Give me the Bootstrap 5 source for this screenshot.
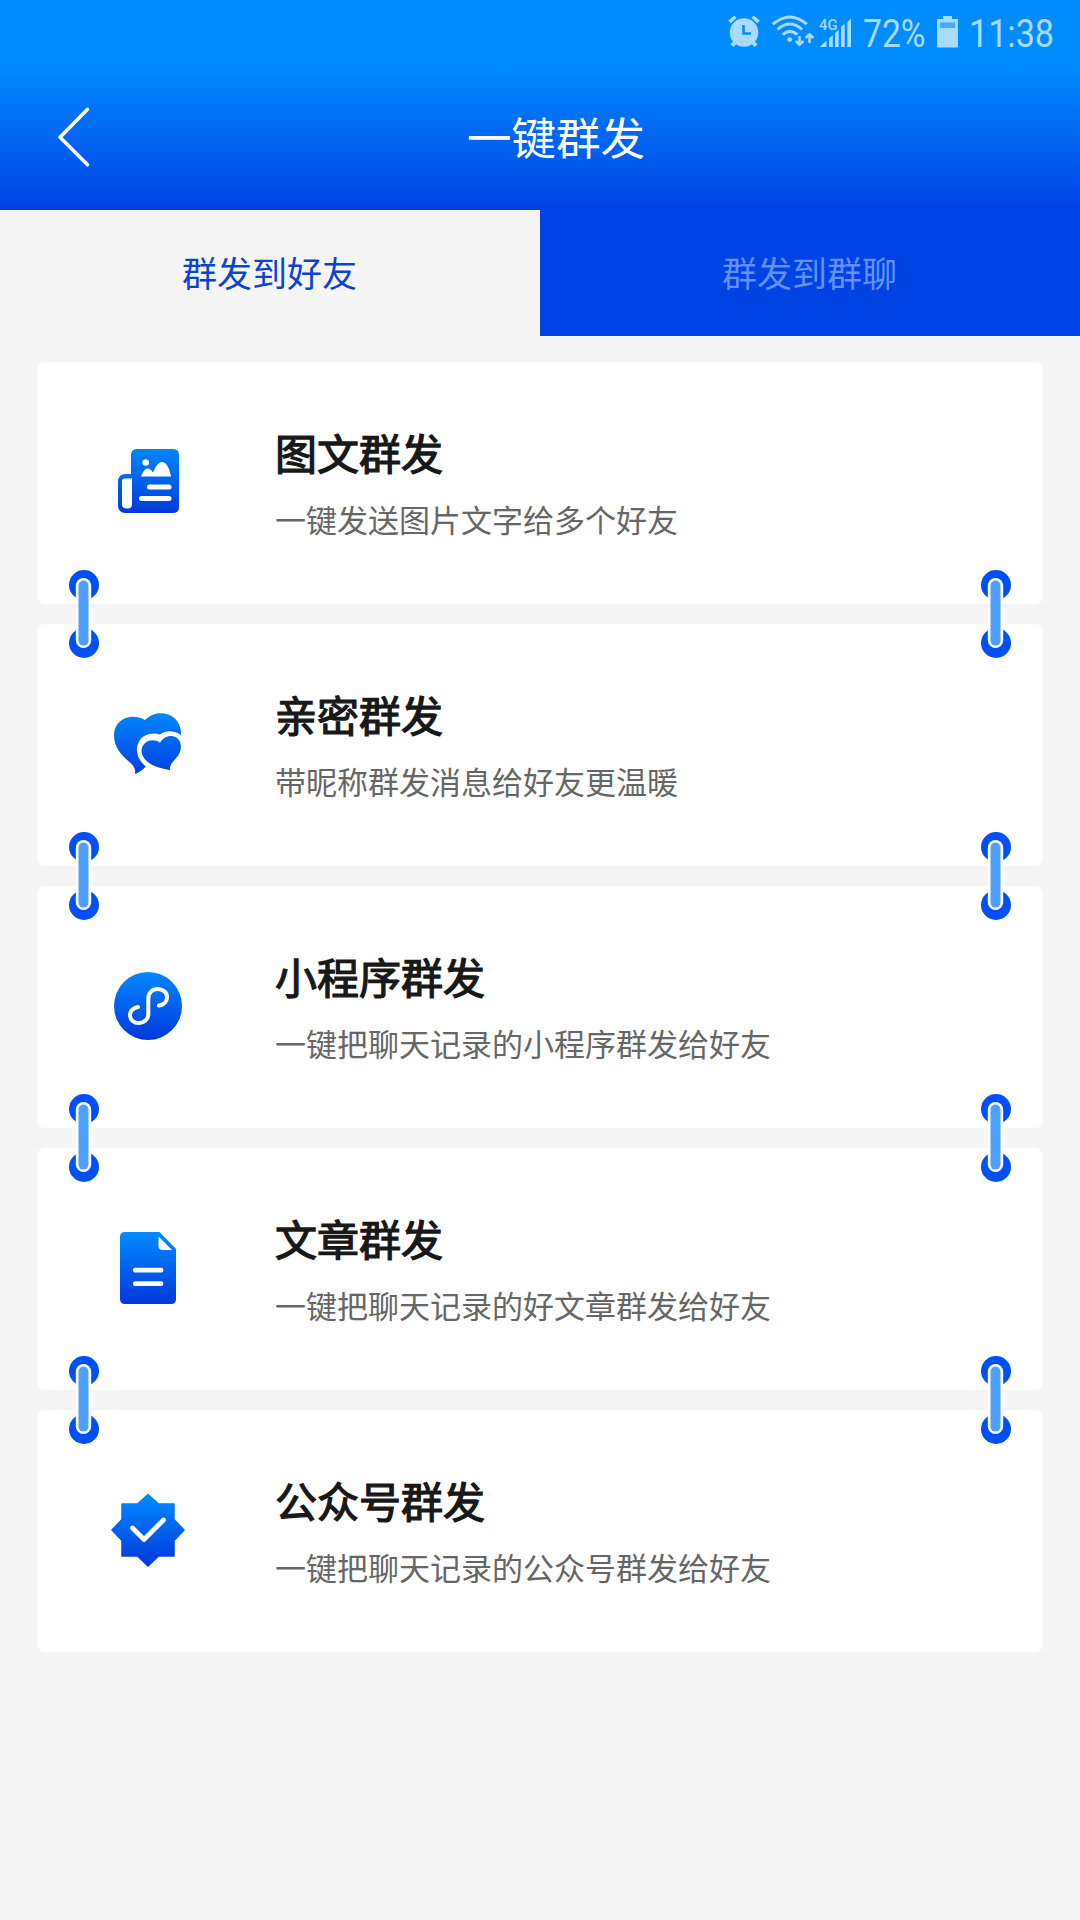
<!DOCTYPE html>
<html lang="zh-CN">
<head>
<meta charset="utf-8">
<meta name="viewport" content="width=device-width, initial-scale=1">
<title>一键群发</title>
<link href="https://cdn.jsdelivr.net/npm/bootstrap@5.3.0/dist/css/bootstrap.min.css" rel="stylesheet">
<style>
body{background:#f5f5f5;font-family:"Noto Sans CJK SC",sans-serif;min-height:1920px;overflow-x:hidden}
.top-area{height:210px;background:linear-gradient(#008cff 0,#008cff 62px,#0043e5 208px)}
.status-line{height:64px;padding-right:24px}
.status-line svg{display:block;flex:none;overflow:visible}
.status-txt{font-family:Roboto,sans-serif;font-size:38.5px}
.title-line{height:146px;padding-left:56px}
.page-title{font-size:44.5px;line-height:60px;color:#fff;margin:0 0 0 375px;font-weight:400;padding-bottom:2px}
.back-btn{border:0;background:none;padding:0;width:36px;height:64px}
.tab-line{height:126px}
.tab-line .nav-link{font-size:35px;line-height:50px;border-radius:0;padding:0 1px 2px 0;color:#6390f5;background:#0043e5}
.tab-line .nav-link.active{color:#0b43d2;background:#f5f5f5}
.send-list{padding:26px 37px 0;gap:20px}
.send-card{height:242px;border:0;border-radius:8px;background:#fff;padding-left:63px}
.pic-cell{width:100px;height:100px;margin-right:75px;flex:none}
.send-name{font-size:42px;line-height:60px;font-weight:400;-webkit-text-stroke:1.25px #181818;color:#181818;margin:0 0 14px}
.send-desc{font-size:31px;line-height:46px;color:#666;margin:0 0 2px}
.ring{position:absolute;top:208px;width:30px;height:88px;z-index:2}
.ring-l{left:32px}
.ring-r{right:32px}
</style>
</head>
<body>
<svg width="0" height="0" class="position-absolute" aria-hidden="true">
<defs>
<linearGradient id="blue" gradientUnits="userSpaceOnUse" x1="0" y1="15" x2="0" y2="86"><stop offset="0" stop-color="#008aff"/><stop offset="1" stop-color="#0038dc"/></linearGradient>
<symbol id="link" viewBox="0 0 30 88"><circle cx="15" cy="15" r="15" fill="#0050f5"/><circle cx="15" cy="73" r="15" fill="#0050f5"/><rect x="6.8" y="8" width="15.4" height="70" rx="7.7" fill="#fff"/><path d="M7 28h15v32H7z" fill="#fff"/><rect x="9.5" y="10.6" width="10" height="65" rx="5" fill="#4da0ff"/></symbol>
</defs>
</svg>

<header class="top-area">
  <div class="status-line d-flex justify-content-end">
    <svg width="44" height="64" viewBox="728 0 44 64"><g fill="#a8dbff"><circle cx="744" cy="32.500" r="14.300"/><path d="M728.300 20.500l6-5 2.200 2.600-6 5.400zM759.700 20.500l-6-5-2.200 2.600 6 5.400zM730.500 44.500l4-5 3 3-4 4.500zM757.500 44.500l-4-5-3 3 4 4.500z"/></g><path d="M743.500 25v8.500h7.500" fill="none" stroke="#008cff" stroke-width="2.600"/></svg>
    <svg width="46" height="64" viewBox="772 0 46 64"><g fill="none" stroke="#a8dbff" stroke-width="3"><path d="M772.800 24.200q17-14.500 34 0M777.500 29.500q12.200-11 24.600 0M782.600 34.600q7.300-6.500 14.800 0"/><path d="M799.500 36v8M795.700 41l3.800 3.800 3.800-3.800M809.500 43v-8M805.700 38l3.800-3.800 3.800 3.800" stroke-width="2.500"/></g><circle cx="789.700" cy="39.600" r="2.400" fill="#a8dbff"/></svg>
    <svg width="43" height="64" viewBox="818 0 43 64" fill="#a8dbff"><text x="819" y="30" font-family="Roboto" font-weight="500" font-size="15.500" textLength="18.500" lengthAdjust="spacingAndGlyphs">4G</text><path d="M819.500 47l7-6.500V47zM829 38.500l3.800-3.500v12H829zM835 33l3.700-3.300V47H835zM841 27l3.700-3.300V47H841zM847.300 22l3.700-3.500V47h-3.700z"/></svg>
    <svg width="73" height="64" viewBox="861 0 73 64"><text class="status-txt" x="863" y="46.600" fill="#a8dbff" textLength="62.500" lengthAdjust="spacingAndGlyphs">72%</text></svg>
    <svg width="34" height="64" viewBox="934 0 34 64"><path d="M943 16h9v3h5q1 0 1 1v26q0 1.500-1.500 1.500h-18q-1.500 0-1.500-1.500V20q0-1 1-1h5z" fill="#a8dbff"/><path d="M940 22.300h15V28h-15z" fill="#4aa9ff"/></svg>
    <svg width="88" height="64" viewBox="968 0 88 64"><text class="status-txt" x="969" y="46.600" fill="#a8dbff" textLength="85" lengthAdjust="spacingAndGlyphs">11:38</text></svg>
  </div>
  <div class="title-line d-flex align-items-center">
    <button class="back-btn" aria-label="返回"><svg class="d-block" width="36" height="64" viewBox="56 105 36 64"><path d="M87.500 109.300L60 137.300l27.500 27.500" fill="none" stroke="#fff" stroke-width="3.600" stroke-linecap="round" stroke-linejoin="round"/></svg></button>
    <h1 class="page-title">一键群发</h1>
  </div>
</header>
<nav class="tab-line nav nav-fill flex-nowrap">
  <a class="nav-link active w-50 d-flex align-items-center justify-content-center" href="#">群发到好友</a>
  <a class="nav-link w-50 d-flex align-items-center justify-content-center" href="#">群发到群聊</a>
</nav>
<main class="send-list d-flex flex-column">
  <section class="card send-card flex-row align-items-center">
    <svg class="pic-cell" viewBox="0 3 100 100"><path d="M37 19h36q6 0 6 6v52q0 6-6 6H26q-8 0-8-8V52q0-8 8-8h5V25q0-6 6-6z" fill="url(#blue)"/><g fill="#fff"><path d="M24.500 48.500H32V74q0 4.500-4.500 4.500h-1Q22 78.500 22 74V51q0-2.500 2.500-2.500z"/><circle cx="45.700" cy="32.500" r="3.300"/><path d="M41 46.500q3-8 6.500-8 3 0 5.500 4 4-10.500 9-10.500 6 0 9 14.500z"/><rect x="47" y="54.500" width="24.500" height="5" rx="2.500"/><rect x="39" y="66" width="32.500" height="5" rx="2.500"/></g></svg>
    <div><h2 class="send-name">图文群发</h2><p class="send-desc">一键发送图片文字给多个好友</p></div>
    <svg class="ring ring-l"><use href="#link"/></svg><svg class="ring ring-r"><use href="#link"/></svg>
  </section>
  <section class="card send-card flex-row align-items-center">
    <svg class="pic-cell" viewBox="0 0 100 100"><path d="M45 25C51 18.500 60 16.500 68 19.500 77 22.500 81.500 31 81 40 74.500 35.500 66 35 60 39.500c-8.500-2.500-17 .5-20.700 6.500-5 8.500-2 18.500 6.400 25.500-3 3.500-6.700 6-10.700 7.500 1-5.500-1.700-8.500-5.500-12C20.500 59.500 14 52 14 40 14 24.500 31 17 45 25z" fill="url(#blue)"/><path d="M60 47.700C63.500 41.500 71 39 76.500 42.500 81 45.500 82 52 79.800 57.500c-2.600 6.500-10.800 10-9.800 17.500C61 73.500 54 71.500 48.500 67.500c-7-5-8.500-12-5.500-17C46.500 45 54.500 43.500 60 47.700z" fill="url(#blue)"/></svg>
    <div><h2 class="send-name">亲密群发</h2><p class="send-desc">带昵称群发消息给好友更温暖</p></div>
    <svg class="ring ring-l"><use href="#link"/></svg><svg class="ring ring-r"><use href="#link"/></svg>
  </section>
  <section class="card send-card flex-row align-items-center">
    <svg class="pic-cell" viewBox="0 2 100 100"><circle cx="48" cy="51" r="34" fill="url(#blue)"/><path d="M38 52c-4 .5-8 3.500-8 8 0 5 4 8 9 8s9.300-3.500 9.300-9V43c0-5 4-9 9.200-9S67 37 67 42s-4 8-8.200 8.500" fill="none" stroke="#fff" stroke-width="4" stroke-linecap="round"/></svg>
    <div><h2 class="send-name">小程序群发</h2><p class="send-desc">一键把聊天记录的小程序群发给好友</p></div>
    <svg class="ring ring-l"><use href="#link"/></svg><svg class="ring ring-r"><use href="#link"/></svg>
  </section>
  <section class="card send-card flex-row align-items-center">
    <svg class="pic-cell" viewBox="0 1 100 100"><path d="M25 14h34.500L76 31v50q0 5-5 5H25q-5 0-5-5V19q0-5 5-5z" fill="url(#blue)"/><path d="M58.500 18.500V28q0 4 4 4H72z" fill="#fff"/><rect x="33" y="49.800" width="30.300" height="4.600" rx="2" fill="#fff"/><rect x="33" y="63.300" width="30.300" height="4.600" rx="2" fill="#fff"/></svg>
    <div><h2 class="send-name">文章群发</h2><p class="send-desc">一键把聊天记录的好文章群发给好友</p></div>
    <svg class="ring ring-l"><use href="#link"/></svg><svg class="ring ring-r"><use href="#link"/></svg>
  </section>
  <section class="card send-card flex-row align-items-center">
    <svg class="pic-cell" viewBox="0 1 100 100"><path d="M48 14.500L58.500 24H74V39.500L84 50 74 60.500V76H58.500L48 86 37.500 76H22V60.500L12 50 22 39.500V24H37.500z" fill="url(#blue)" stroke="url(#blue)" stroke-width="1.500" stroke-linejoin="round"/><path d="M32.500 48L44 59.500 63.500 40" fill="none" stroke="#fff" stroke-width="4.800" stroke-linecap="round" stroke-linejoin="round"/></svg>
    <div><h2 class="send-name">公众号群发</h2><p class="send-desc">一键把聊天记录的公众号群发给好友</p></div>
  </section>
</main>
<script src="https://cdn.jsdelivr.net/npm/bootstrap@5.3.0/dist/js/bootstrap.bundle.min.js"></script>
</body>
</html>
